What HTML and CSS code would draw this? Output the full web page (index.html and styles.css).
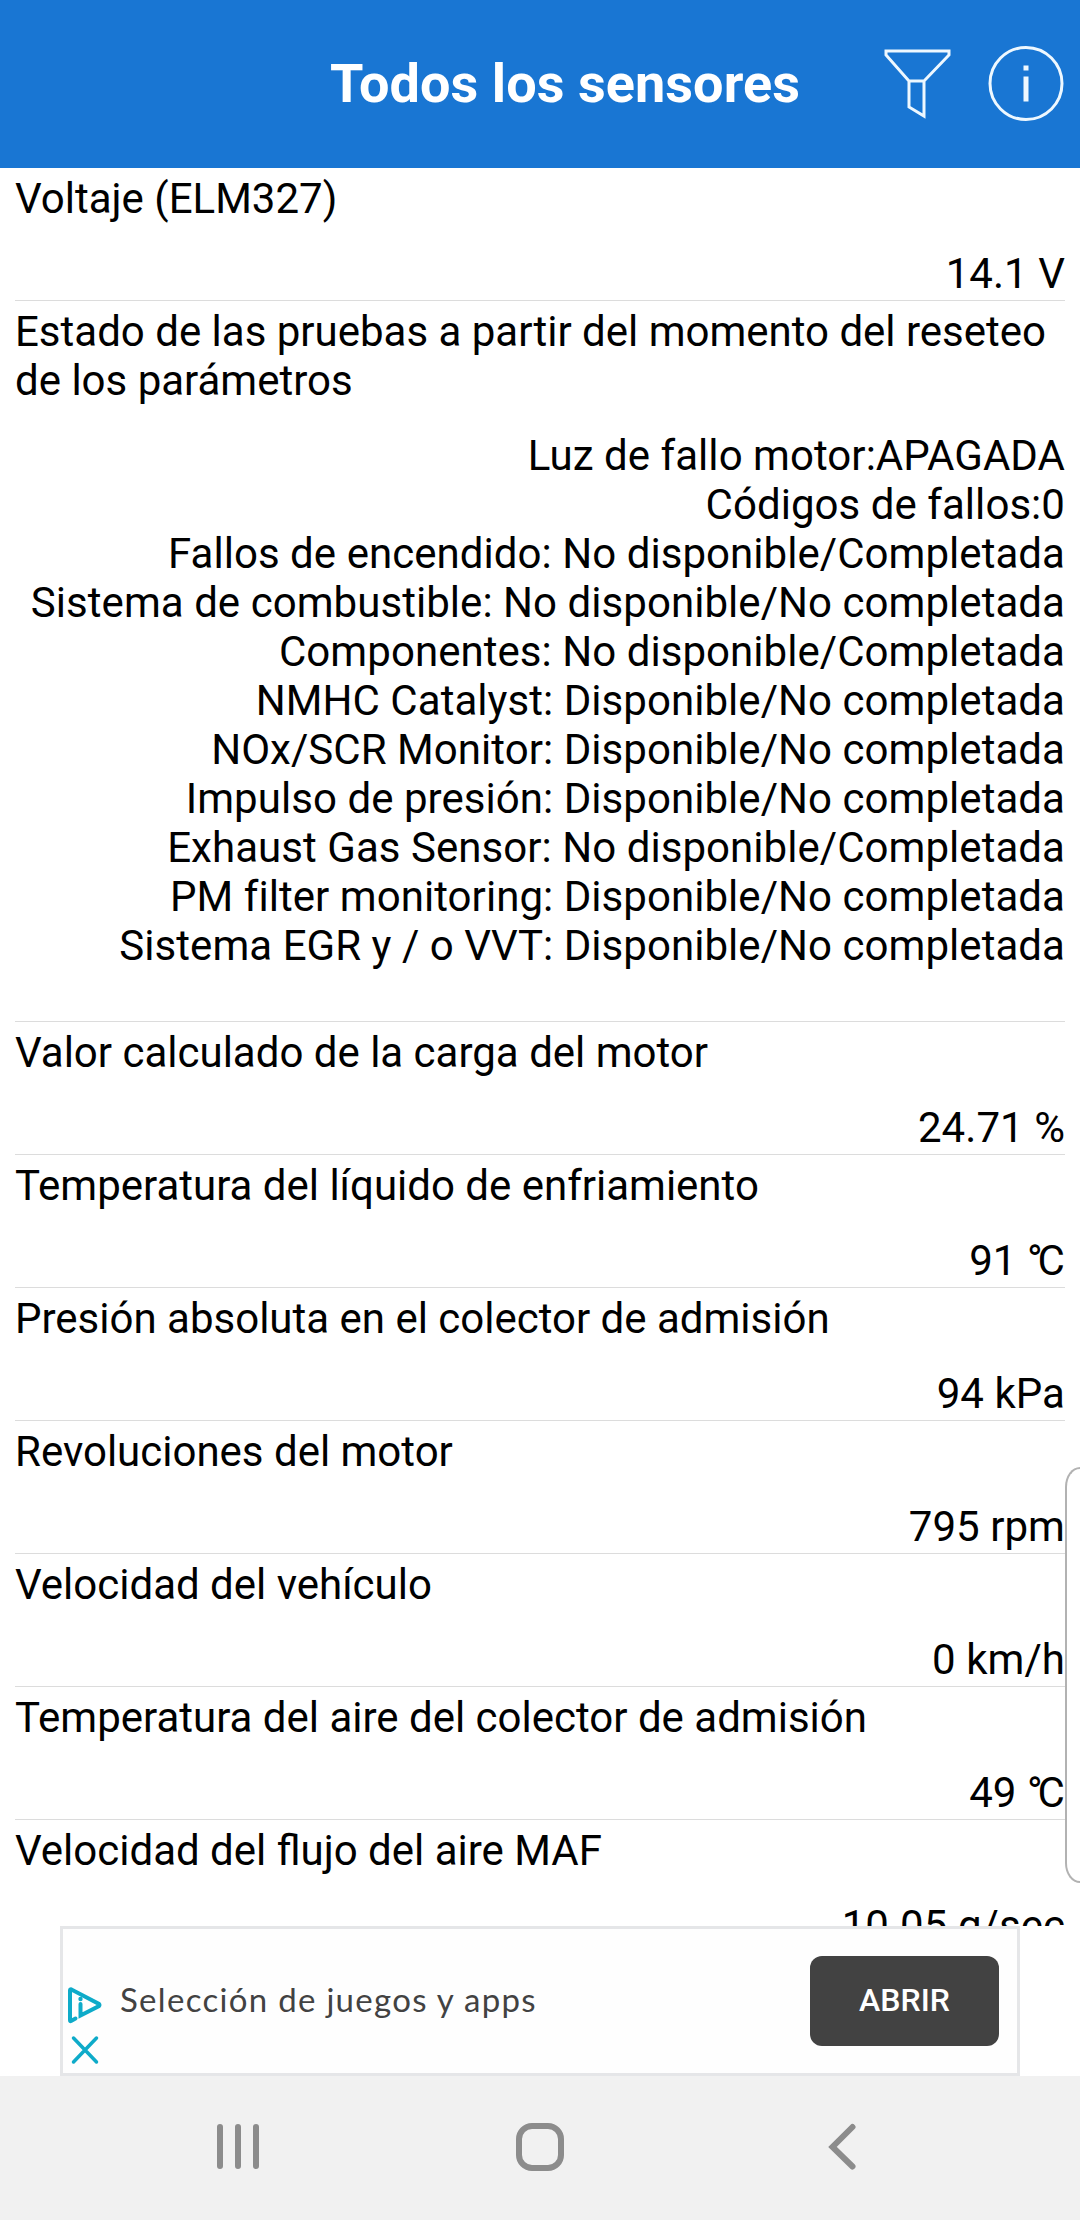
FILE: index.html
```
<!DOCTYPE html>
<html lang="es">
<head>
    <meta charset="UTF-8">
    <title>Todos los sensores</title>
    <link rel="stylesheet" href="styles.css">
</head>
<body>
    <header>
        <h1>Todos los sensores</h1>
        <svg class="icon-filter" width="76" height="76" viewBox="0 0 76 76">
            <path d="M6 5H69V9L44 35V70L29 61V35L6 9ZM29 35H44"/>
        </svg>
        <svg class="icon-info" width="76" height="76" viewBox="0 0 76 76">
            <circle cx="38" cy="37.500" r="36"/>
            <rect x="35.5" y="19.500" width="5" height="5"/>
            <rect x="35.5" y="30.500" width="5" height="25"/>
        </svg>
    </header>
    <main class="sensor-list">
        <div class="sensor">
            <div class="name">Voltaje (ELM327)</div>
            <div class="value">14.1 V</div>
        </div>
        <div class="sensor">
            <div class="name">Estado de las pruebas a partir del momento del reseteo de los parámetros</div>
            <div class="value">
                Luz de fallo motor:APAGADA<br>
                Códigos de fallos:0<br>
                Fallos de encendido: No disponible/Completada<br>
                Sistema de combustible: No disponible/No completada<br>
                Componentes: No disponible/Completada<br>
                NMHC Catalyst: Disponible/No completada<br>
                NOx/SCR Monitor: Disponible/No completada<br>
                Impulso de presión: Disponible/No completada<br>
                Exhaust Gas Sensor: No disponible/Completada<br>
                PM filter monitoring: Disponible/No completada<br>
                Sistema EGR y / o VVT: Disponible/No completada<br>
                <br>
            </div>
        </div>
        <div class="sensor">
            <div class="name">Valor calculado de la carga del motor</div>
            <div class="value">24.71 %</div>
        </div>
        <div class="sensor">
            <div class="name">Temperatura del líquido de enfriamiento</div>
            <div class="value">91 <span class="degree">°</span>C</div>
        </div>
        <div class="sensor">
            <div class="name">Presión absoluta en el colector de admisión</div>
            <div class="value">94 kPa</div>
        </div>
        <div class="sensor">
            <div class="name">Revoluciones del motor</div>
            <div class="value">795 rpm</div>
        </div>
        <div class="sensor">
            <div class="name">Velocidad del vehículo</div>
            <div class="value">0 km/h</div>
        </div>
        <div class="sensor">
            <div class="name">Temperatura del aire del colector de admisión</div>
            <div class="value">49 <span class="degree">°</span>C</div>
        </div>
        <div class="sensor">
            <div class="name">Velocidad del flujo del aire MAF</div>
            <div class="value">10.05 g/sec</div>
        </div>
    </main>
    <div class="ad">
        <div class="ad-icons">
            <svg width="36" height="38" viewBox="0 0 36 38">
                <path d="M8.5 32.5L4 35Q3 35.5 3 34V4.500Q3 3 4.500 3.500L32 18Q33 19 32 20L13.500 29.500V18"/>
                <circle cx="13.500" cy="13" r="2.200"/>
            </svg>
            <svg width="36" height="30" viewBox="0 0 36 30">
                <path class="close" d="M6.500 3L29.500 27M29.500 3L6.500 27"/>
            </svg>
        </div>
        <span class="ad-text">Selección de juegos y apps</span>
        <button class="ad-button">ABRIR</button>
    </div>
    <nav>
        <svg width="48" height="48" viewBox="0 0 48 48">
            <path d="M6 4V43M24 4V43M42 4V43"/>
        </svg>
        <svg width="48" height="48" viewBox="0 0 48 48">
            <rect x="3" y="3" width="42" height="42" rx="13"/>
        </svg>
        <svg width="48" height="48" viewBox="0 0 48 48">
            <path d="M34.500 4L14.500 24L34.500 43.500"/>
        </svg>
    </nav>
    <div class="edge-panel"></div>
</body>
</html>
```
FILE: styles.css
```
* {
    box-sizing: border-box;
}
body {
    margin: 0;
    width: 1080px;
    height: 2220px;
    display: flex;
    flex-direction: column;
    overflow: hidden;
    background-color: white;
    color: black;
    font-family: Roboto, sans-serif;
}
header {
    height: 168px;
    flex: none;
    display: flex;
    align-items: center;
    justify-content: flex-end;
    padding-right: 16px;
    background-color: #1976d3;
}
h1 {
    margin: 0 80px 0 0;
    color: white;
    font-size: 54px;
    line-height: 64px;
    font-weight: bold;
    letter-spacing: 0.06px;
}
.icon-filter {
    margin-right: 32px;
    fill: none;
    stroke: #eef8ff;
    stroke-width: 3;
}
.icon-info circle {
    fill: none;
    stroke: #eef8ff;
    stroke-width: 3;
}
.icon-info rect {
    fill: #eef8ff;
}
.sensor-list {
    flex: 1;
    min-height: 0;
    overflow: hidden;
    padding: 0 15px;
    font-size: 42px;
    line-height: 49px;
}
.sensor {
    padding: 6px 0 2px;
    border-bottom: 1px solid #dcdcdc;
}
.value {
    margin-top: 26px;
    text-align: right;
    letter-spacing: 0.05px;
}
.degree {
    letter-spacing: -5px;
}
.ad {
    width: 960px;
    height: 150px;
    flex: none;
    margin: 0 auto;
    padding-right: 18px;
    display: flex;
    align-items: center;
    border: 3px solid #e5e6e8;
    background-color: #fefefe;
}
.ad-icons {
    display: flex;
    flex-direction: column;
    gap: 11px;
    align-self: flex-end;
    padding: 0 0 8px 4px;
}
.ad-icons svg {
    fill: none;
    stroke: #0eabc9;
    stroke-width: 4;
    stroke-linecap: round;
}
.ad-icons circle {
    fill: #0eabc9;
    stroke: none;
}
.ad-icons .close {
    stroke-width: 3.5;
}
.ad-text {
    flex: 1;
    padding: 0 0 4px 17px;
    color: #424242;
    font-family: Lato, sans-serif;
    font-size: 33px;
    letter-spacing: 1.3px;
}
.ad-button {
    width: 189px;
    height: 90px;
    padding: 0 0 3px;
    border: none;
    border-radius: 12px;
    background-color: #424242;
    color: white;
    font-family: Roboto, sans-serif;
    font-size: 32px;
    font-weight: 500;
}
nav {
    height: 144px;
    flex: none;
    display: flex;
    justify-content: center;
    align-items: center;
    gap: 254px;
    padding-bottom: 2px;
    background-color: #f1f1f1;
}
nav svg {
    fill: none;
    stroke: #8c8c8c;
    stroke-width: 6;
    stroke-linecap: round;
}
.edge-panel {
    position: absolute;
    left: 1065px;
    top: 1467px;
    width: 15px;
    height: 416px;
    border: 2px solid #b2b2b2;
    border-right: none;
    border-radius: 15px 0 0 15px / 20px 0 0 20px;
    background-color: white;
}
```
